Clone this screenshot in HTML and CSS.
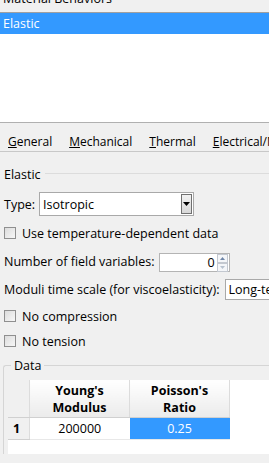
FILE: index.html
```html
<!DOCTYPE html>
<html lang="en">

<head>
    <meta charset="UTF-8">
    <meta name="viewport" content="width=device-width, initial-scale=1.0">
    <title>Edit Material</title>
    <link rel="stylesheet" href="styles.css">
</head>

<body>
    <div class="behaviors">
        <div class="behaviorsTitle"><span>Material Behaviors</span></div>
        <div class="behaviorList">
            <div class="behaviorItem selected">Elastic</div>
        </div>
    </div>

    <div class="tabs">
        <span class="tab"><u>G</u>eneral</span>
        <span class="tab"><u>M</u>echanical</span>
        <span class="tab"><u>T</u>hermal</span>
        <span class="tab"><u>E</u>lectrical/Magnetic</span>
    </div>

    <div class="group">
        <div class="groupTitle"><span>Elastic</span></div>

        <div class="row typeRow">
            <span>Type:</span>
            <div class="combo typeCombo">
                <span>Isotropic</span>
                <span class="comboButton">
                    <svg width="7" height="4" viewBox="0 0 7 4"><path d="M0 0h7L3.5 4z" fill="#000"/></svg>
                </span>
            </div>
        </div>

        <label class="row check tempCheck"><span class="box"></span>Use temperature-dependent data</label>

        <div class="row fieldRow">
            <span>Number of field variables:</span>
            <div class="spin">
                <span class="spinValue">0</span>
                <span class="spinArrows">
                    <span class="arrow"><svg width="5" height="3" viewBox="0 0 5 3"><path d="M0 3h5L2.5 0z" fill="#6f86a8"/></svg></span>
                    <span class="arrow"><svg width="5" height="3" viewBox="0 0 5 3"><path d="M0 0h5L2.5 3z" fill="#b8c2cf"/></svg></span>
                </span>
            </div>
        </div>

        <div class="row moduliRow">
            <span>Moduli time scale (for viscoelasticity):</span>
            <div class="combo moduliCombo"><span>Long-term</span></div>
        </div>

        <label class="row check compressionCheck"><span class="box"></span>No compression</label>
        <label class="row check tensionCheck"><span class="box"></span>No tension</label>
    </div>

    <fieldset class="data">
        <legend>Data</legend>
        <div class="grid">
            <table class="dataTable">
                <thead>
                    <tr>
                        <th class="corner"></th>
                        <th>Young's<br>Modulus</th>
                        <th>Poisson's<br>Ratio</th>
                    </tr>
                </thead>
                <tbody>
                    <tr>
                        <th class="rowHead">1</th>
                        <td>200000</td>
                        <td class="selectedCell">0.25</td>
                    </tr>
                </tbody>
            </table>
        </div>
    </fieldset>
</body>

</html>
```

FILE: styles.css
```css
html, body {
    height: 100%;
}

body {
    margin: 0;
    padding: 0;
    background-color: #f0f0f0;
    color: #000;
    font-family: "Open Sans", "Liberation Sans", sans-serif;
    font-size: 12.5px;
    overflow: hidden;
}

.behaviorsTitle {
    height: 12px;
    overflow: hidden;
    border-bottom: 1px solid #a0a0a0;
}

.behaviorsTitle span {
    display: block;
    margin-top: -10px;
    padding-left: 3px;
    line-height: 18px;
}

.behaviorList {
    height: 109px;
    background-color: #fff;
    border-bottom: 1px solid #b0b0b0;
}

.behaviorItem {
    height: 21px;
    line-height: 21px;
    padding-left: 3px;
}

.selected {
    background-color: #3399ff;
    color: #fff;
}

.tabs {
    display: flex;
    gap: 17px;
    height: 29px;
    padding: 8px 0 0 8px;
    box-sizing: border-box;
    align-items: center;
    border-bottom: 1px solid #c8c8c8;
    font-size: 12px;
    white-space: nowrap;
    overflow: hidden;
}

.group {
    padding: 15px 0 0 4px;
}

.groupTitle {
    display: flex;
    align-items: center;
    gap: 4px;
    height: 14px;
}

.groupTitle::after {
    content: "";
    flex: 1;
    border-top: 1px solid #dcdcdc;
    margin-top: -2px;
}

.row {
    display: flex;
    align-items: center;
    white-space: nowrap;
    height: 24px;
}

.typeRow {
    gap: 4px;
    margin-top: 11px;
}

.combo {
    display: flex;
    align-items: center;
    justify-content: space-between;
    background-color: #fff;
    border: 1px solid #a9a9a9;
    padding-left: 3px;
    box-sizing: border-box;
}

.typeCombo {
    width: 155px;
    height: 24px;
    padding-right: 1px;
}

.comboButton {
    display: flex;
    align-items: center;
    justify-content: center;
    width: 11px;
    height: 20px;
    border: 1px solid #707070;
    background: linear-gradient(#f2f2f2, #d8d8d8);
    box-sizing: border-box;
}

.check {
    gap: 6px;
}

.box {
    width: 10px;
    height: 10px;
    border: 1px solid #8f8f8f;
    background: linear-gradient(135deg, #dcdcdc, #f7f7f7);
}

.tempCheck {
    margin-top: 5px;
}

.fieldRow {
    gap: 4px;
    margin-top: 4px;
}

.spin {
    display: flex;
    align-items: center;
    width: 71px;
    height: 19px;
    margin-top: 3px;
    background-color: #fff;
    border: 1px solid #b4b4b4;
    box-sizing: border-box;
}

.spinValue {
    flex: 1;
    text-align: right;
    padding-right: 2px;
}

.spinArrows {
    display: flex;
    flex-direction: column;
    padding-right: 1px;
}

.arrow {
    display: flex;
    align-items: center;
    justify-content: center;
    width: 9px;
    height: 7px;
    border: 1px solid #c3c8d0;
    background-color: #f4f6f9;
}

.moduliRow {
    gap: 5px;
    margin-top: 4px;
}

.moduliCombo {
    width: 60px;
    height: 21px;
}

.compressionCheck {
    margin-top: 3px;
}

.tensionCheck {
    margin-top: 1px;
}

.data {
    margin: 4px 0 0 3px;
    padding: 6px 0 0 4px;
    border: 1px solid #d5d5d5;
    border-right: none;
    border-bottom: none;
    border-radius: 3px 0 0 0;
    height: 90px;
}

.data legend {
    padding: 0 3px;
    margin-left: 3px;
}

.grid {
    height: 100%;
    background-color: #fff;
}

.dataTable {
    border-collapse: collapse;
    table-layout: fixed;
}

.dataTable th {
    width: 99px;
    height: 37px;
    padding: 0;
    font-weight: bold;
    font-size: 12.5px;
    line-height: 17px;
    background: linear-gradient(#ffffff, #ebebeb);
    border-right: 1px solid #dcdcdc;
    border-bottom: 1px solid #d0d0d0;
}

.dataTable th.corner,
.dataTable th.rowHead {
    width: 16px;
    background: #f0f0f0;
}

.dataTable td {
    height: 21px;
    padding: 0;
    text-align: center;
    border-bottom: 1px solid #e8e8e8;
}

.dataTable th.rowHead {
    height: 21px;
    text-align: left;
    padding-left: 5px;
}

.selectedCell {
    background-color: #3399ff;
    color: #fff;
}
```
